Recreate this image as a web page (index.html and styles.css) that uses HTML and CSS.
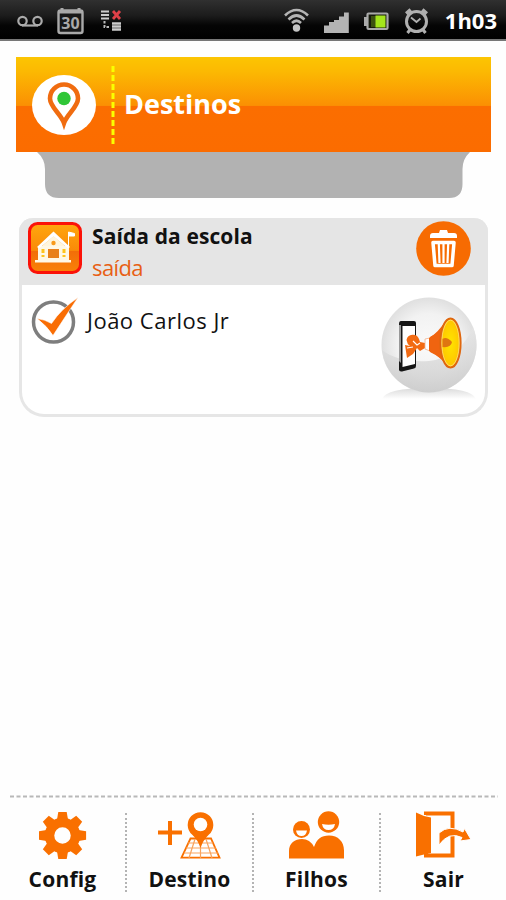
FILE: index.html
```html
<!DOCTYPE html>
<html lang="pt-BR">
<head>
    <meta charset="UTF-8">
    <meta name="viewport" content="width=device-width, initial-scale=1.0">
    <title>Destinos</title>
    <link rel="stylesheet" href="styles.css">
</head>
<body>
    <div class="status-bar">
        <svg class="status-icons" width="130" height="38" viewBox="0 0 130 38">
            <!-- voicemail -->
            <g fill="none" stroke="#aaa" stroke-width="2.2">
                <circle cx="22.5" cy="20" r="4.2"/>
                <circle cx="37.5" cy="20" r="4.2"/>
                <path d="M22 24.500h16"/>
            </g>
            <!-- calendar -->
            <rect x="58.5" y="9.5" width="24" height="22.5" rx="2" fill="#1a1a1a" stroke="#aaa" stroke-width="2.4"/>
            <path d="M58 11h25M62 7v4M79 7v4" stroke="#aaa" stroke-width="3"/>
            <text class="calendar-day" x="70.5" y="27.500" text-anchor="middle">30</text>
            <!-- network error -->
            <path d="M101 10.5h8M101 14h8M101 17.5h8" stroke="#ccc" stroke-width="2.2"/>
            <path d="M113 10l7 8M120 10l-7 8" stroke="#e04048" stroke-width="2.8"/>
            <path d="M104.500 20v6h6" fill="none" stroke="#bbb" stroke-width="2" stroke-dasharray="2.500 1.500"/>
            <path d="M112 22.500h9M112 25.500h9M112 28.500h9" stroke="#ccc" stroke-width="2.6"/>
        </svg>
        <svg class="status-icons" width="160" height="38" viewBox="280 0 160 38">
            <!-- wifi -->
            <g fill="none" stroke="#b4b4b4" stroke-width="2.6">
                <path d="M285 14.500Q296.500 3.500 308 14.500"/>
                <path d="M288.500 18.500Q296.500 10.500 304.500 18.500"/>
                <path d="M292 22Q296.500 17.500 301 22"/>
            </g>
            <circle cx="296.500" cy="27" r="3.7" fill="#c4c4c4"/>
            <!-- signal -->
            <path d="M324 24.500h5v7.500h-5zM329 21h5v11h-5zM334 19h5v13h-5zM339 15.500h5V32h-5zM344 11.500h4.800V32H344z" fill="#b4b4b4"/>
            <!-- battery -->
            <rect x="367.500" y="12.500" width="20" height="15.500" rx="1" fill="#161a0c" stroke="#aaa" stroke-width="2.2"/>
            <path d="M364 16h3v9h-3z" fill="#aaa"/>
            <path d="M371 15h5v11h-5z" fill="#3c5210"/>
            <path d="M375.500 14.500h10v12h-10z" fill="#a4e51c"/>
            <!-- alarm -->
            <g stroke="#b0b0b0" fill="none" stroke-width="3">
                <circle cx="416.500" cy="20.500" r="10"/>
                <path d="M406.500 13l4.500-4M426.500 13l-4.500-4" stroke-width="4.500"/>
                <path d="M410.500 28l-3 4M422.500 28l3 4"/>
                <path d="M411 16.500l5.500 4.500 4-3.500" stroke-width="1.800"/>
            </g>
        </svg>
        <span class="clock">1h03</span>
    </div>

    <div class="header">
        <svg class="header-logo" width="66" height="62" viewBox="0 0 66 62">
            <ellipse cx="33" cy="31" rx="32" ry="30" fill="#fff"/>
            <path d="M33 49C30 40 19 33 19 24.500a14 14 0 0 1 28 0C47 33 36 40 33 49z" fill="none" stroke="#f06c10" stroke-width="4.600"/>
            <circle cx="33" cy="24.500" r="6.700" fill="#2fc637"/>
        </svg>
        <svg class="header-divider" width="4" height="80">
            <path d="M2 1v78" stroke="#faff00" stroke-width="3" stroke-dasharray="6 3"/>
        </svg>
        <h1 class="header-title">Destinos</h1>
    </div>
    <svg class="header-tab" width="434" height="46" viewBox="0 0 434 46">
        <path d="M0 0Q8 7 8 17V32Q8 46 22 46H412Q425.500 46 425.500 32V17Q425.500 7 433 0z" fill="#b2b2b2"/>
    </svg>

    <div class="card">
        <div class="card-head">
            <svg class="school" width="54" height="52" viewBox="0 0 54 52">
                <defs>
                    <linearGradient id="schoolBg" x2="0" y2="1">
                        <stop offset="0" stop-color="#ffa70d"/>
                        <stop offset=".55" stop-color="#fa8a08"/>
                        <stop offset=".56" stop-color="#f26d08"/>
                        <stop offset="1" stop-color="#f98208"/>
                    </linearGradient>
                </defs>
                <rect x="1.500" y="1.500" width="51" height="49" rx="8" fill="url(#schoolBg)" stroke="#fb1208" stroke-width="3"/>
                <path d="M7 38h36v2.500H7zM10 24h31v14h-31z" fill="#fff8e6"/>
                <path d="M9 25L25.500 9.500 42 25l-2 1.500-14.500-12-14.500 12z" fill="#fff"/>
                <path d="M14 24l11.500-10L37 24z" fill="#fff5dc"/>
                <path d="M40.500 24V10M40.500 10l6 1.500v2.500h-6z" fill="#fff" stroke="#fff" stroke-width="1"/>
                <circle cx="25.500" cy="21" r="2.200" fill="#f89a1b"/>
                <path d="M20 27h11v9H20z" fill="#e8801a"/>
                <path d="M13.500 27h3v4h-3zM34.500 27h3v4h-3zM13.500 33h3v2h-3zM34.500 33h3v2h-3z" fill="#ffc41c"/>
            </svg>
            <div class="card-text">
                <div class="card-title">Saída da escola</div>
                <div class="card-type">saída</div>
            </div>
            <svg class="trash" width="55" height="55" viewBox="0 0 55 55">
                <circle cx="27.500" cy="27.500" r="27.300" fill="#f76b02"/>
                <path d="M14 15c0-2 1-3 3-3h6l1-3h7l1 3h6c2 0 3 1 3 3v2H14z" fill="#fff"/>
                <path d="M17 21.500h21l-2 23H19z" fill="none" stroke="#fff" stroke-width="3.500" stroke-linejoin="round"/>
                <path d="M22.800 23l.7 19M27.500 23v19M32.200 23l-.7 19" stroke="#fff" stroke-width="2.200"/>
            </svg>
        </div>
        <div class="card-body">
            <svg class="check" width="48" height="48" viewBox="0 0 48 48">
                <circle cx="22.500" cy="25" r="20" fill="#fff" stroke="#7e7e7e" stroke-width="3.500"/>
                <path d="M6 21.500Q14 22.500 20.500 26.500 30 12 47 .5 34 20 22 38.500 16 29 6 21.500z" fill="#f96d04" stroke="#fff" stroke-width=".6"/>
            </svg>
            <span class="child-name">João Carlos Jr</span>
            <svg class="notify" width="96" height="104" viewBox="0 0 96 104">
                <defs>
                    <radialGradient id="ball" cx=".5" cy=".5" r=".55">
                        <stop offset="0" stop-color="#fafafa"/>
                        <stop offset=".6" stop-color="#f2f2f2"/>
                        <stop offset="1" stop-color="#dadada"/>
                    </radialGradient>
                    <linearGradient id="ballShade" x2="0" y2="1">
                        <stop offset="0" stop-color="#e6e6e6"/>
                        <stop offset="1" stop-color="#c8c8c8"/>
                    </linearGradient>
                    <linearGradient id="floor" x2="0" y2="1">
                        <stop offset="0" stop-color="#dadada"/>
                        <stop offset="1" stop-color="#fff"/>
                    </linearGradient>
                    <radialGradient id="horn">
                        <stop offset="0" stop-color="#ffe500"/>
                        <stop offset="1" stop-color="#ffc400"/>
                    </radialGradient>
                </defs>
                <path d="M1 102Q5 91 48 91 91 91 95 102z" fill="url(#floor)"/>
                <circle cx="48" cy="48" r="47.500" fill="url(#ball)"/>
                <path d="M1 53Q18 66 48 64 80 60 92 30A47.500 47.500 0 0 1 48 95.500 47.500 47.500 0 0 1 1 53z" fill="url(#ballShade)" opacity=".75"/>
                <!-- phone -->
                <path d="M18 27q0-3 2-3h13q2 0 2 2v43q0 2-2 2.500l-12 3q-3 .5-3-2z" fill="#161616"/>
                <path d="M18 28v36l2 2V28z" fill="#999"/>
                <path d="M21.500 29H34v38l-12.500 3z" fill="#fff"/>
                <!-- person shouting -->
                <path d="M25.500 43a6.500 6.500 0 0 1 12.500-1l1 3 5 1v5l-5 3-3-3-4 6-6 4-2-13 5 1q-3-2-3.500-6z" fill="#f26a12"/>
                <path d="M32 44l4 4 3-2M26 51l6-1" fill="none" stroke="#fff" stroke-width="1.100"/>
                <path d="M44 42l5-1v13l-5-2z" fill="#fff" stroke="#efb08c" stroke-width=".8"/>
                <!-- horn -->
                <path d="M48 41Q57 36 66 22l2 48Q58 58 48 54z" fill="#f06410"/>
                <path d="M49 40Q61 34 68 21.500v49Q60 60 49 55z" fill="#f06410"/>
                <ellipse cx="69.500" cy="46" rx="10" ry="24.500" fill="url(#horn)" stroke="#df670f" stroke-width="2.200"/>
                <ellipse cx="69.500" cy="46" rx="8.700" ry="22.800" fill="none" stroke="#fff0a8" stroke-width=".6"/>
                <path d="M61.500 42q4-3 9.500 3-1 6-9.500 5z" fill="#df7611"/>
            </svg>
        </div>
    </div>

    <div class="footer">
        <svg class="footer-line" width="488" height="3">
            <path d="M0 1.500h488" stroke="#b8b8b8" stroke-width="1.800" stroke-dasharray="4 2.500"/>
        </svg>
        <div class="menu">
            <div class="menu-item menu-config">
                <svg width="48" height="48" viewBox="-23.500 -24.500 48 48">
                    <g fill="#f97000">
                        <path id="tooth" d="M-5.500-16l1.300-7.600h8.400L5.500-16z"/>
                        <use href="#tooth" transform="rotate(45)"/>
                        <use href="#tooth" transform="rotate(90)"/>
                        <use href="#tooth" transform="rotate(135)"/>
                        <use href="#tooth" transform="rotate(180)"/>
                        <use href="#tooth" transform="rotate(225)"/>
                        <use href="#tooth" transform="rotate(270)"/>
                        <use href="#tooth" transform="rotate(315)"/>
                    </g>
                    <circle r="13" fill="none" stroke="#f97000" stroke-width="9.500"/>
                </svg>
                <span class="menu-label">Config</span>
            </div>
            <div class="menu-item menu-destino">
                <svg width="64" height="48" viewBox="0 0 64 48">
                    <path d="M0 21.500h24M12 10v24" stroke="#f97000" stroke-width="4"/>
                    <path d="M32.500 27.500h20.500l8.500 19.200H23.500z" fill="#fff" stroke="#f97000" stroke-width="1.800"/>
                    <path d="M30 32h25M28 37h30M26 42h34M37 28l-6 19M42.500 28v19M48 28l6 19" fill="none" stroke="#f9a35c" stroke-width="1.200"/>
                    <path d="M42.500 37Q40 29 34 23.500a12.800 12.800 0 1 1 17 0Q45 29 42.500 37z" fill="#f97000"/>
                    <circle cx="42.500" cy="13.500" r="6.800" fill="#fff"/>
                </svg>
                <span class="menu-label">Destino</span>
            </div>
            <div class="menu-item menu-filhos">
                <svg width="56" height="48" viewBox="0 0 56 48">
                    <path d="M0 47.500V40C0 32 6 28 13 28q8 0 12 8C28 28 32 24.500 40 24.500c9 0 15 6 15 15v8z" fill="#f97000"/>
                    <circle cx="12.500" cy="18.500" r="8.500" fill="#f97000"/>
                    <circle cx="39.500" cy="11" r="10.700" fill="#f97000"/>
                    <path d="M7 19.500h11q-1 5.500-5.500 5.500T7 19.500zM33 13q6.500 1.500 13 0-1 6-6.500 6T33 13z" fill="#fff"/>
                </svg>
                <span class="menu-label">Filhos</span>
            </div>
            <div class="menu-item menu-sair">
                <svg width="56" height="48" viewBox="0 0 56 48">
                    <path d="M10 4V2.500h26.500V44.500H10V42" fill="none" stroke="#f97000" stroke-width="4"/>
                    <path d="M0 1.500l8 3.500 7 1.500V42l-7 1.500-8 2z" fill="#f97000"/>
                    <path d="M23 34V22Q33 13 47 21L48.500 17.500l6.500 11-11 1.500 2-3.500Q33 20 23 34z" fill="#f97000" stroke="#fff" stroke-width="1"/>
                </svg>
                <span class="menu-label">Sair</span>
            </div>
        </div>
    </div>
</body>
</html>
```
FILE: styles.css
```css
* {
    box-sizing: border-box;
}
body {
    margin: 0;
    height: 900px;
    display: flex;
    flex-direction: column;
    background-color: #fefefe;
    color: #111;
    font-family: "Open Sans", "Noto Sans", sans-serif;
    overflow: hidden;
}
svg {
    display: block;
    flex-shrink: 0;
}
.status-bar {
    display: flex;
    align-items: center;
    height: 41px;
    padding-right: 9px;
    background: linear-gradient(#303030, #1c1c1c 40%, #050505 65%, #000);
    border-bottom: 2px solid #777;
}
.status-icons + .status-icons {
    margin-left: 150px;
}
.calendar-day {
    font-size: 16px;
    font-weight: bold;
    fill: #aaa;
}
.clock {
    margin-left: auto;
    color: #fff;
    font-size: 22px;
    font-weight: bold;
    line-height: 38px;
}
.header {
    display: flex;
    align-items: center;
    height: 95px;
    margin: 16px 15px 0 16px;
    padding-left: 15px;
    background: linear-gradient(#fcc502, #fcb902 15%, #fb9003 51%, #fb6e00 52%, #fb6c00);
}
.header-divider {
    margin-left: 14px;
}
.header-title {
    margin: 0 0 2px 9px;
    color: #fff;
    font-size: 27px;
    font-weight: bold;
}
.header-tab {
    margin-left: 37px;
}
.card {
    height: 199px;
    margin: 20px 18px 0 19px;
    border: 3px solid #e6e6e6;
    border-top: 0;
    border-radius: 14px 14px 25px 25px;
    background-color: #fff;
}
.card-head {
    display: flex;
    height: 67px;
    margin: 0 -3px;
    padding: 4px 17px 0 9px;
    border-radius: 14px 14px 0 0;
    background-color: #e5e5e5;
}
.trash {
    margin-top: -1px;
}
.card-text {
    flex: 1;
    margin-top: -1px;
    padding-left: 10px;
}
.card-title,
.card-type {
    font-size: 22px;
    line-height: 31px;
}
.card-title {
    font-size: 21px;
    font-weight: bold;
    letter-spacing: 0.1px;
}
.card-type {
    color: #e85f14;
    letter-spacing: -0.6px;
}
.card-body {
    display: flex;
    padding: 12px 8px 0 9px;
}
.child-name {
    flex: 1;
    padding-left: 8px;
    font-size: 22px;
    line-height: 47px;
    letter-spacing: 0.5px;
}
.footer {
    margin-top: auto;
    height: 105px;
}
.footer-line {
    margin-left: 10px;
}
.menu {
    display: grid;
    grid-template-columns: 127px 127px 127px 125px;
    padding-top: 15px;
}
.menu-item {
    display: flex;
    flex-direction: column;
    align-items: center;
    height: 79px;
    border-right: 2px dotted #b4b4b4;
}
.menu-item svg {
    margin-top: -2px;
}
.menu-sair {
    border-right: 0;
}
.menu-label {
    font-size: 21px;
    font-weight: bold;
    line-height: 41px;
    letter-spacing: 0.2px;
}
```
